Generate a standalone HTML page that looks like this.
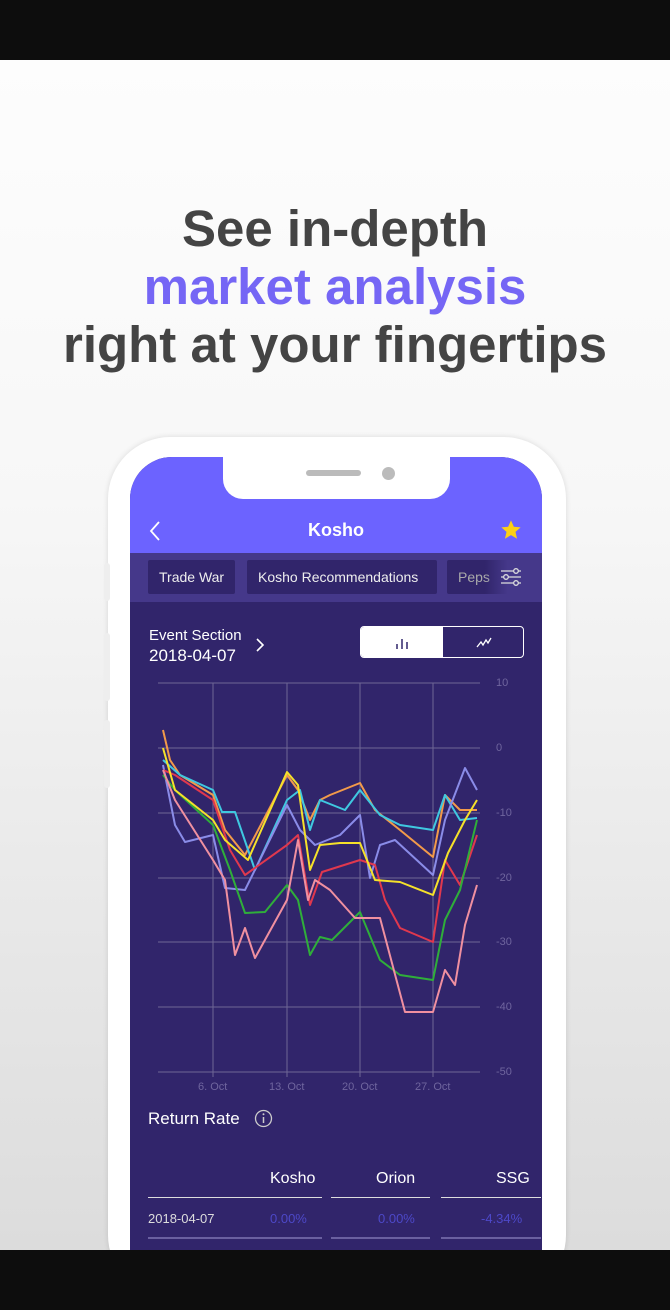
<!DOCTYPE html>
<html><head><meta charset="utf-8"><style>
*{margin:0;padding:0;box-sizing:border-box}
html,body{width:670px;height:1310px;overflow:hidden}
body{position:relative;font-family:"Liberation Sans",sans-serif;background:linear-gradient(#fdfdfd 60px,#f7f7f7 500px,#dcdcdc 1250px)}
.bar{position:absolute;left:0;width:670px;background:#0d0d0d;z-index:5}
h1{position:absolute;top:200px;left:0;width:670px;text-align:center;font-size:51px;line-height:58px;font-weight:bold;color:#444;letter-spacing:0}
h1 span{color:#7566f5}
.phone{position:absolute;left:108px;top:437px;width:458px;height:860px;background:#fff;border-radius:62px;box-shadow:0 0 6px rgba(0,0,0,.12)}
.btn{position:absolute;left:104px;width:6px;background:#eee;border-radius:3px}
.screen{position:absolute;left:130px;top:457px;width:412px;height:800px;background:#31256b;border-radius:42px 42px 0 0;overflow:hidden}
.hdr{position:absolute;left:0;top:0;width:412px;height:96px;background:#6c63ff}
.notch{position:absolute;left:93px;top:0;width:227px;height:42px;background:#fff;border-radius:0 0 20px 20px}
.tabs{position:absolute;left:0;top:96px;width:412px;height:49px;background:#45388a}
.tab{position:absolute;top:7px;height:34px;background:#31256b;color:#eee;font-size:14px;line-height:34px;padding:0 11px;border-radius:2px}
.t{position:absolute;color:#fff}
.ax{position:absolute;font-size:11px;color:#6f659e}
</style></head><body>
<div class="bar" style="top:0;height:60px"></div>
<h1>See in-depth<br><span>market analysis</span><br>right at your fingertips</h1>
<div class="phone"></div>
<div class="btn" style="top:563px;height:38px"></div>
<div class="btn" style="top:633px;height:68px"></div>
<div class="btn" style="top:720px;height:68px"></div>
<div class="screen">
 <div class="hdr"></div>
 <div class="notch"><div style="position:absolute;left:83px;top:13px;width:55px;height:6px;border-radius:3px;background:#bbb"></div><div style="position:absolute;left:159px;top:10px;width:13px;height:13px;border-radius:50%;background:#bbb"></div></div>
 <svg style="position:absolute;left:18px;top:63px" width="14" height="22"><path d="M11 2 L3 11 L11 20" stroke="#fff" stroke-width="1.8" fill="none"/></svg>
 <div class="t" style="left:0;width:412px;top:63px;text-align:center;font-size:18px;font-weight:bold">Kosho</div>
 <svg style="position:absolute;left:370px;top:62px" width="22" height="22" viewBox="0 0 24 24"><path d="M12 1.5l3.1 6.9 7.4.7-5.6 5 1.7 7.4L12 17.6l-6.6 3.9 1.7-7.4-5.6-5 7.4-.7z" fill="#fcd015"/></svg>
 <div class="tabs">
  <div class="tab" style="left:18px">Trade War</div>
  <div class="tab" style="left:117px;width:190px">Kosho Recommendations</div>
  <div class="tab" style="left:317px;width:100px;color:#aaa">Peps</div>
  <div style="position:absolute;left:355px;top:0;width:57px;height:49px;background:linear-gradient(90deg,rgba(69,56,138,0),#45388a 40%)"></div>
  <svg style="position:absolute;left:370px;top:14px" width="22" height="20"><g stroke="#ddd" stroke-width="1.3" fill="#45388a"><line x1="1" y1="4" x2="21" y2="4"/><line x1="1" y1="10" x2="21" y2="10"/><line x1="1" y1="16" x2="21" y2="16"/><circle cx="16" cy="4" r="2.3"/><circle cx="6" cy="10" r="2.3"/><circle cx="16" cy="16" r="2.3"/></g></svg>
 </div>
 <div class="t" style="left:19px;top:170px;font-size:15px">Event Section</div>
 <div class="t" style="left:19px;top:189px;font-size:17px">2018-04-07</div>
 <svg style="position:absolute;left:125px;top:180px" width="10" height="16"><path d="M2 2L8 8L2 14" stroke="#fff" stroke-width="1.6" fill="none"/></svg>
 <div style="position:absolute;left:230px;top:169px;width:164px;height:32px;border:1px solid #fff;border-radius:4px;overflow:hidden">
  <div style="position:absolute;left:0;top:0;width:82px;height:32px;background:#fff"></div>
  <svg style="position:absolute;left:33px;top:9px" width="16" height="14"><g stroke="#31256b" stroke-width="1.5"><line x1="3" y1="8" x2="3" y2="13"/><line x1="8" y1="3" x2="8" y2="13"/><line x1="13" y1="6" x2="13" y2="13"/></g></svg>
  <svg style="position:absolute;left:114px;top:8px" width="18" height="14"><path d="M2 12L6 7L8 10L11 5L13 8L16 3" stroke="#fff" stroke-width="1.3" fill="none"/></svg>
 </div>
 <div class="t" style="left:18px;top:652px;font-size:17px">Return Rate</div>
 <svg style="position:absolute;left:124px;top:652px" width="19" height="19"><circle cx="9.5" cy="9.5" r="8" stroke="#ccc" stroke-width="1.3" fill="none"/><line x1="9.5" y1="8" x2="9.5" y2="14" stroke="#ccc" stroke-width="1.5"/><circle cx="9.5" cy="5.3" r="1" fill="#ccc"/></svg>
 <div class="t" style="left:140px;top:713px;font-size:16px">Kosho</div>
 <div class="t" style="left:246px;top:713px;font-size:16px">Orion</div>
 <div class="t" style="left:366px;top:713px;font-size:16px">SSG</div>
 <div style="position:absolute;left:18px;top:740px;width:174px;height:1px;background:#ddd"></div>
 <div style="position:absolute;left:201px;top:740px;width:99px;height:1px;background:#ddd"></div>
 <div style="position:absolute;left:311px;top:740px;width:100px;height:1px;background:#ddd"></div>
 <div class="t" style="left:18px;top:754px;font-size:13px;color:#ddd">2018-04-07</div>
 <div class="t" style="left:140px;top:754px;font-size:13px;color:#4d48c8">0.00%</div>
 <div class="t" style="left:248px;top:754px;font-size:13px;color:#4d48c8">0.00%</div>
 <div class="t" style="left:351px;top:754px;font-size:13px;color:#4d48c8">-4.34%</div>
 <div style="position:absolute;left:18px;top:780px;width:174px;height:2px;background:#6a60a0"></div>
 <div style="position:absolute;left:201px;top:780px;width:99px;height:2px;background:#6a60a0"></div>
 <div style="position:absolute;left:311px;top:780px;width:100px;height:2px;background:#6a60a0"></div>
</div>
<svg style="position:absolute;left:0;top:0" width="670" height="1310">
 <g stroke="#6e6696" stroke-width="1">
  <line x1="158" y1="683" x2="480" y2="683"/><line x1="158" y1="748" x2="480" y2="748"/><line x1="158" y1="813" x2="480" y2="813"/><line x1="158" y1="878" x2="480" y2="878"/><line x1="158" y1="942" x2="480" y2="942"/><line x1="158" y1="1007" x2="480" y2="1007"/><line x1="158" y1="1072" x2="480" y2="1072"/>
  <line x1="213" y1="683" x2="213" y2="1077"/><line x1="287" y1="683" x2="287" y2="1077"/><line x1="360" y1="683" x2="360" y2="1077"/><line x1="433" y1="683" x2="433" y2="1077"/>
 </g>
 <g fill="none" stroke-width="2" stroke-linejoin="round">
  <polyline stroke="#f29a4a" points="163,730 170,760 180,775 213,795 225,830 245,855 287,775 298,790 310,820 320,800 330,795 360,783 375,810 400,830 433,857 445,795 460,810 477,810"/>
  <polyline stroke="#3fc8e0" points="163,760 180,775 213,790 222,812 235,812 255,870 287,800 300,790 310,830 320,800 345,810 360,790 380,815 400,825 433,830 445,795 460,820 477,818"/>
  <polyline stroke="#8a8ce8" points="163,765 175,825 185,842 213,835 225,888 245,890 287,805 300,830 315,845 340,835 360,815 370,878 380,845 395,840 433,875 445,820 465,768 477,790"/>
  <polyline stroke="#e0384e" points="163,770 175,775 213,800 230,850 245,875 287,845 298,835 310,905 322,872 360,860 375,865 385,900 400,928 433,942 445,860 460,885 477,835"/>
  <polyline stroke="#2fae3a" points="163,775 175,790 213,825 230,870 245,913 265,912 287,885 298,900 310,955 320,937 332,940 360,912 380,960 400,975 433,980 445,920 460,890 477,820"/>
  <polyline stroke="#f090a0" points="163,770 175,800 213,860 225,880 235,955 245,928 255,958 287,900 298,840 308,900 315,880 330,890 355,918 380,918 405,1012 433,1012 445,970 455,985 465,925 477,885"/>
  <polyline stroke="#f5e12a" points="163,748 175,790 213,820 225,840 248,860 287,772 298,785 310,870 320,845 340,843 360,843 375,880 400,882 433,895 448,853 465,820 477,800"/>
 </g>
</svg>
<div class="ax" style="left:496px;top:677px">10</div>
<div class="ax" style="left:496px;top:742px">0</div>
<div class="ax" style="left:496px;top:807px">-10</div>
<div class="ax" style="left:496px;top:872px">-20</div>
<div class="ax" style="left:496px;top:936px">-30</div>
<div class="ax" style="left:496px;top:1001px">-40</div>
<div class="ax" style="left:496px;top:1066px">-50</div>
<div class="ax" style="left:198px;top:1081px">6. Oct</div>
<div class="ax" style="left:269px;top:1081px">13. Oct</div>
<div class="ax" style="left:342px;top:1081px">20. Oct</div>
<div class="ax" style="left:415px;top:1081px">27. Oct</div>
<div class="bar" style="top:1250px;height:60px"></div>
</body></html>
